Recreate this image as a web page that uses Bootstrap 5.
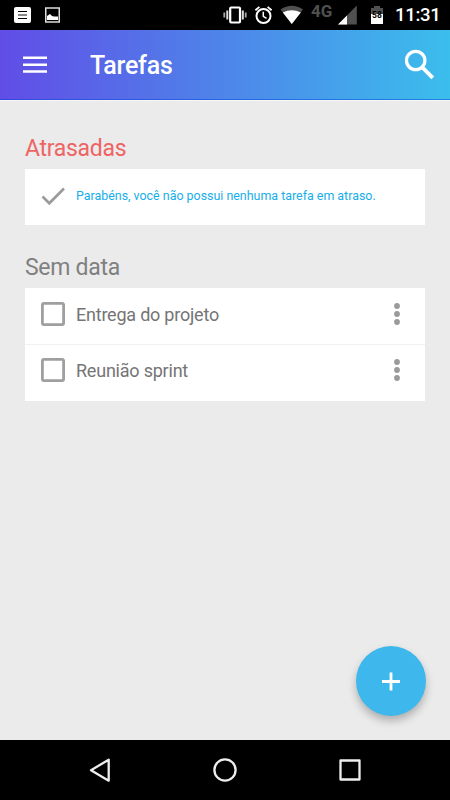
<!DOCTYPE html>
<html lang="pt-BR">
<head>
<meta charset="utf-8">
<meta name="viewport" content="width=device-width, initial-scale=1">
<title>Tarefas</title>
<link href="https://cdn.jsdelivr.net/npm/bootstrap@5.3.0/dist/css/bootstrap.min.css" rel="stylesheet">
<style>
body{font-family:Roboto,"Liberation Sans",sans-serif;background:#ebebeb;color:#757575;height:800px;overflow:hidden}
svg{display:block;flex:none}
.status-bar{height:30px;background:#000;color:#fff}
.net{width:26px;font-size:17px;font-weight:700;line-height:22px;color:#505050;height:30px}
.clock{font-size:18.6px;letter-spacing:-.35px;font-weight:500;line-height:31px;width:45px;margin-right:10px;white-space:nowrap}
.app-bar{height:70px;background:linear-gradient(90deg,#614de6,#3bbeec);box-shadow:inset 0 -1px 0 rgba(0,70,220,.5)}
.menu-icon{margin-left:23px}
.app-title{font-size:25px;letter-spacing:-.25px;font-weight:500;line-height:70px;height:70px;color:#fff;margin-left:43px;padding-top:1px}
main{padding:30px 25px 0;border-top:1px solid #f7f7f7}
.section-title{font-size:23px;letter-spacing:-.3px;font-weight:400;line-height:34px;height:38px;margin:0;padding-top:1px;color:#808080}
.section-title.late{color:#ee6464}
.panel{background:#fff;margin-bottom:25px}
.task{height:56px;padding:0 16px}
.task+.task{height:57px;border-top:1px solid #f1f1f1}
.task-name{font-size:18px;letter-spacing:-.22px;line-height:24px;margin-left:11px;padding-bottom:2px}
.task+.task .task-name{padding-bottom:4px}
.task+.task svg{margin-bottom:2px}
.note{font-size:12.43px;color:#17aeea;margin-left:11px;padding-bottom:2px;white-space:nowrap}
.fab{width:70px;height:70px;background:#3eb8ec;box-shadow:0 5px 8px rgba(0,0,0,.26);margin:0 24px 24px 0}
.nav-keys{height:60px;background:#000}
</style>
<script src="https://cdn.jsdelivr.net/npm/bootstrap@5.3.0/dist/js/bootstrap.bundle.min.js"></script>
</head>
<body class="d-flex flex-column m-0">
<div class="status-bar d-flex flex-shrink-0">
  <svg width="60" height="30" viewBox="4 0 60 30" class="ms-1">
    <rect x="14" y="7" width="17" height="16" rx="2" fill="#fff"/>
    <path d="M18 11.5h9M18 18.5h9" stroke="#000" stroke-width="1.2"/><path d="M18 15h9" stroke="#888" stroke-width="2"/>
    <rect x="45.75" y="8" width="13.5" height="14" fill="none" stroke="#ddd" stroke-width="1.5"/>
    <path d="M47 20v-4l3-2 2 2 2 .5 4 0V20z" fill="#fff"/>
  </svg>
  <svg width="25" height="30" viewBox="222 0 25 30" class="ms-auto">
    <rect x="230.2" y="7.5" width="9.8" height="15" rx="1" fill="none" stroke="#fff" stroke-width="2.2"/>
    <path d="M227.3 10.5v9M242.8 10.5v9" stroke="#ddd" stroke-width="2"/><path d="M224.3 12.5v5M245.7 12.5v5" stroke="#aaa" stroke-width="1.8"/>
  </svg>
  <svg width="29" height="30" viewBox="247 0 29 30">
    <circle cx="263.5" cy="16" r="7" fill="none" stroke="#fff" stroke-width="2"/>
    <path d="M263.3 11.8v4.6l3.2 2" fill="none" stroke="#fff" stroke-width="1.5"/><path d="M255.4 10.3l4-3.4M271.6 10.3l-4-3.4" stroke="#fff" stroke-width="1.8"/>
  </svg>
  <svg width="35" height="30" viewBox="276 0 35 30">
    <path d="M280.5 9.5Q291.8 2 303 9.5L291.8 24z" fill="#505050"/>
    <path d="M282.8 12.6Q291.8 7.8 300.8 12.6L291.8 24z" fill="#fff"/>
  </svg>
  <div class="net">4G</div>
  <svg width="58" height="30" viewBox="337 0 58 30">
    <path d="M356.8 5.5v19H338z" fill="#505050"/><path d="M347 15.5v9h-9z" fill="#fff"/>
    <path d="M371 8h3V6h6v2h3v7h-12z" fill="#505050"/><path d="M371 14h12v10h-12z" fill="#fff"/>
    <text x="377" y="18.3" text-anchor="middle" font-size="8.5" font-weight="700" fill="#000">58</text>
  </svg>
  <div class="clock">11:31</div>
</div>
<header class="app-bar d-flex align-items-center flex-shrink-0">
  <svg width="24" height="18" viewBox="0 0 24 18" class="menu-icon"><path d="M0 1.7h24M0 8.7h24M0 15.5h24" stroke="#fff" stroke-width="2.5"/></svg>
  <h1 class="app-title mb-0">Tarefas</h1>
  <svg width="46" height="70" viewBox="404 30 46 70" class="ms-auto"><circle cx="415.7" cy="60.5" r="9.2" fill="none" stroke="#fff" stroke-width="3.2"/><path d="M421.8 66.8l11 11" stroke="#fff" stroke-width="3.8"/></svg>
</header>
<main class="flex-grow-1 d-flex flex-column">
  <h2 class="section-title late">Atrasadas</h2>
  <div class="panel"><div class="task d-flex align-items-center">
    <svg width="24" height="24" viewBox="41 185 24 24"><path d="M42.5 196.5l6.8 6.8L64 188.5" fill="none" stroke="#9b9b9b" stroke-width="2.7"/></svg>
    <span class="note">Parabéns, você não possui nenhuma tarefa em atraso.</span>
  </div></div>
  <h2 class="section-title">Sem data</h2>
  <div class="panel">
    <div class="task d-flex align-items-center">
      <svg width="24" height="30" viewBox="0 0 24 30"><rect x="1.4" y="2.4" width="21.2" height="21.2" rx="1.5" fill="none" stroke="#9f9f9f" stroke-width="2.8"/></svg>
      <span class="task-name">Entrega do projeto</span>
      <svg width="24" height="30" viewBox="0 0 24 30" class="ms-auto" fill="#9a9a9a"><circle cx="12" cy="5" r="2.9"/><circle cx="12" cy="13" r="2.9"/><circle cx="12" cy="21" r="2.9"/></svg>
    </div>
    <div class="task d-flex align-items-center">
      <svg width="24" height="30" viewBox="0 0 24 30"><rect x="1.4" y="2.4" width="21.2" height="21.2" rx="1.5" fill="none" stroke="#9f9f9f" stroke-width="2.8"/></svg>
      <span class="task-name">Reunião sprint</span>
      <svg width="24" height="30" viewBox="0 0 24 30" class="ms-auto" fill="#9a9a9a"><circle cx="12" cy="5" r="2.9"/><circle cx="12" cy="13" r="2.9"/><circle cx="12" cy="21" r="2.9"/></svg>
    </div>
  </div>
</main>
<button class="fab btn border-0 rounded-circle p-0 d-flex align-items-center justify-content-center align-self-end flex-shrink-0" aria-label="Nova tarefa">
  <svg width="20" height="20" viewBox="0 0 20 20"><path d="M1 10.5h18M10 1.5v18" stroke="#fff" stroke-width="2.8"/></svg>
</button>
<nav class="nav-keys d-flex flex-shrink-0" aria-label="Sistema">
  <svg width="450" height="60" viewBox="0 740 450 60" fill="none" stroke="#eee" stroke-width="2.3" stroke-linejoin="round"><path d="M108.7 759.7v21L91 770.2z"/><circle cx="225" cy="770" r="10.6"/><rect x="340.5" y="760.5" width="19" height="19"/></svg>
</nav>
</body>
</html>
